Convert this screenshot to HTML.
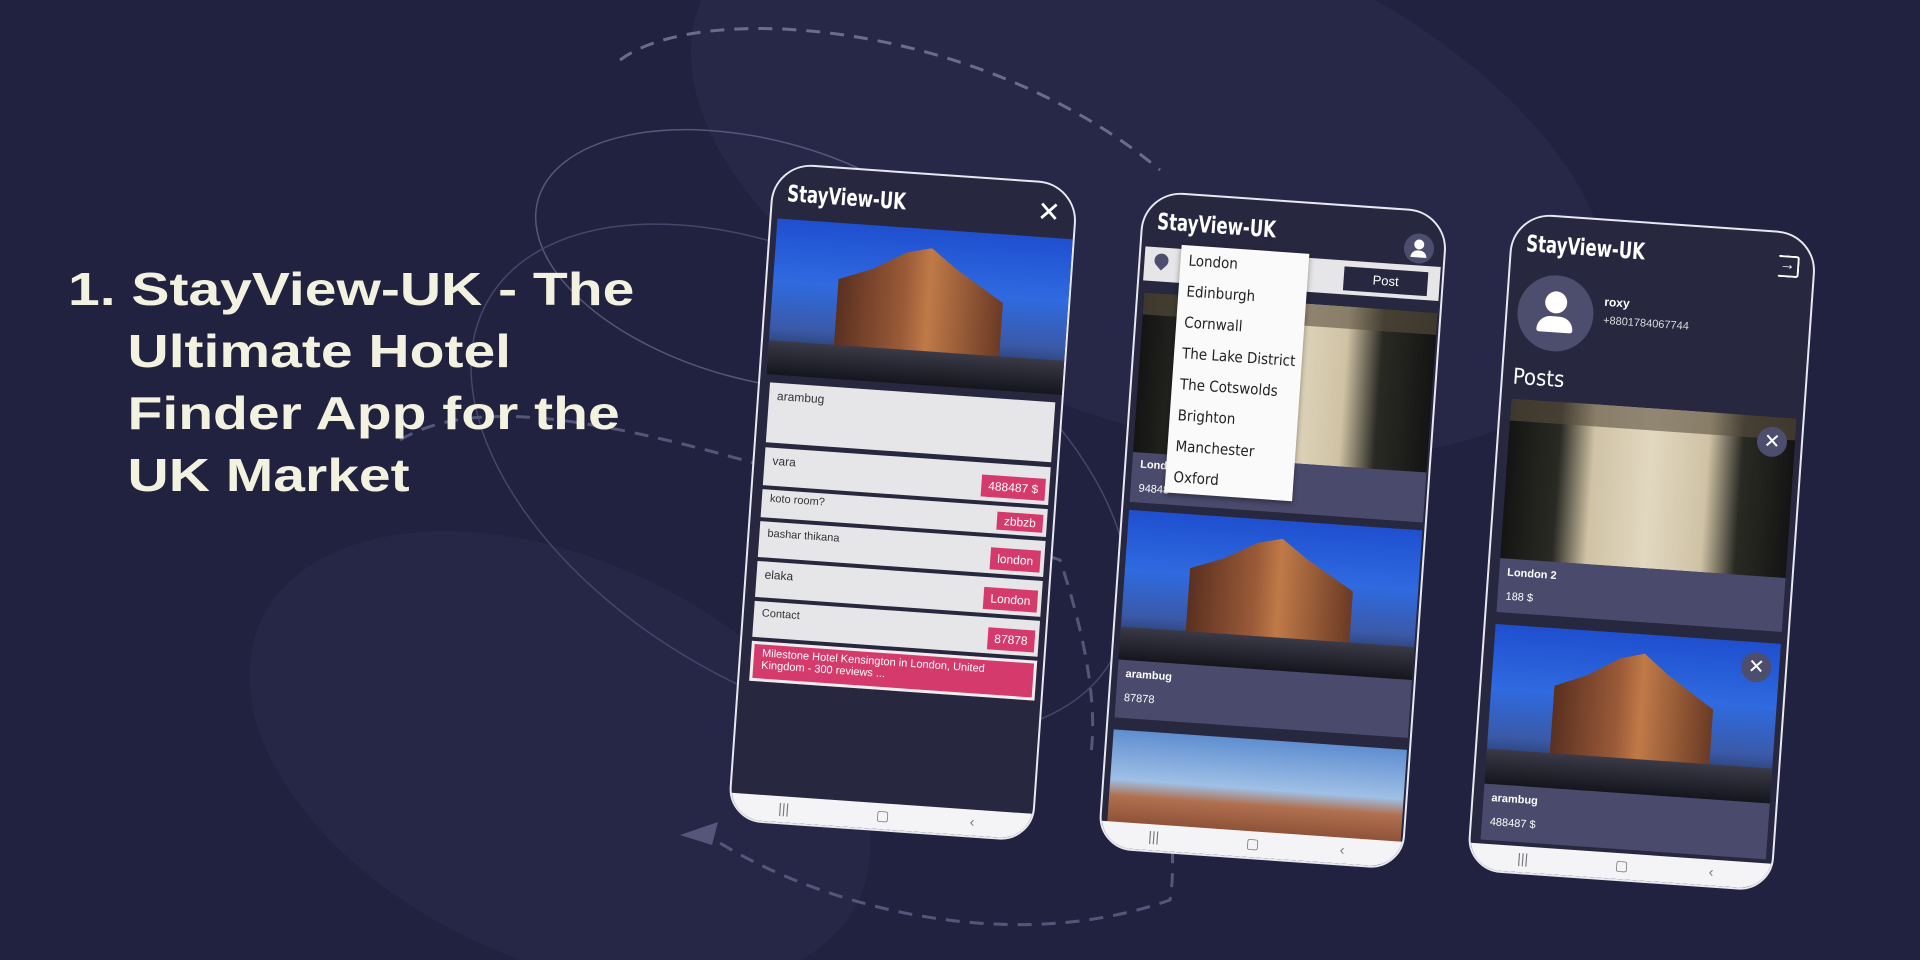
<!DOCTYPE html>
<html style="overflow:hidden"><head><meta charset="utf-8"><style>
*{margin:0;padding:0;box-sizing:border-box}
html,body{width:1920px;height:960px;overflow:hidden}
body{background:#21223f;font-family:"Liberation Sans",sans-serif;position:relative}
.title{position:absolute;left:68px;top:258px;color:#f3f1df;font-weight:bold;font-size:46px;line-height:62px;transform:scaleX(1.24);transform-origin:left top}
.title div{white-space:nowrap}
.title .i{padding-left:48px}
.phone{position:absolute;width:306px;height:660px;background:#27273f;border:2px solid #e8e8f0;border-radius:40px 40px 34px 34px;overflow:hidden;transform:rotate(4deg)}
.hd{position:absolute;left:14px;top:16px;color:#fff;font-weight:bold;font-size:23px;font-family:"DejaVu Sans Condensed","Liberation Sans",sans-serif;transform:scaleX(.8);transform-origin:left;white-space:nowrap}
.nav{position:absolute;left:0;right:0;bottom:0;height:26px;background:#f4f4f6;color:#777;font-size:14px}
.nav span{position:absolute;top:4px}
.night{background:linear-gradient(180deg,#1f4fcf 0%,#2f6ae0 40%,#3a5aa8 70%,#1a1a2a 100%);position:absolute;overflow:hidden}
.night:before{content:"";position:absolute;left:22%;top:12%;width:56%;height:80%;background:linear-gradient(90deg,#5a3020,#9a5a38 40%,#c07a48 55%,#6a3a25);clip-path:polygon(0 30%,20% 20%,40% 5%,55% 0,70% 15%,100% 40%,100% 100%,0 100%)}
.night:after{content:"";position:absolute;left:0;bottom:0;width:100%;height:22%;background:linear-gradient(#3a3a48,#15151d)}
.posh{position:absolute;overflow:hidden;background:linear-gradient(90deg,#141414 0%,#2a2a24 18%,#cfc2a5 30%,#e2d8c0 50%,#cfc2a5 70%,#2a2a24 82%,#141414 100%)}
.posh:after{content:"";position:absolute;left:0;top:0;right:0;height:14%;background:#5a5040;opacity:.6}
.dusk{position:absolute;overflow:hidden;background:linear-gradient(180deg,#5f8ed0,#9fc0e6 45%,#b07050 60%,#7a3e28 100%)}
.row{position:absolute;left:10px;width:286px;background:#e6e6e8;color:#333;font-size:12px;padding:6px 8px}
.badge{position:absolute;right:4px;bottom:4px;background:#d43a6c;color:#fff;font-size:12px;padding:4px 7px}
.cap{position:absolute;background:#4a4a6c;color:#fff;font-size:11px}
.dd div{height:31px;line-height:31px;padding-left:8px;font-size:15px;color:#222;font-family:"DejaVu Sans Condensed","Liberation Sans",sans-serif}
.xbtn{position:absolute;width:30px;height:30px;border-radius:50%;background:#4d4d6e;color:#fff;text-align:center;line-height:30px;font-size:20px}
</style></head><body>
<svg width="1920" height="960" style="position:absolute;left:0;top:0">
<ellipse cx="1150" cy="170" rx="480" ry="250" fill="#272848" transform="rotate(20 1150 170)"/>
<ellipse cx="560" cy="760" rx="330" ry="200" fill="#262746" transform="rotate(25 560 760)"/>
<ellipse cx="760" cy="260" rx="230" ry="120" fill="none" stroke="#55577a" stroke-width="1.5" transform="rotate(15 760 260)"/>
<ellipse cx="800" cy="480" rx="360" ry="210" fill="none" stroke="#45476a" stroke-width="1.5" transform="rotate(30 800 480)"/>
<path d="M620 60 C700 0 980 20 1160 170" fill="none" stroke="#6a6c8a" stroke-width="3" stroke-dasharray="14 10"/>
<path d="M400 440 C500 380 700 440 1060 560 C1080 620 1100 700 1090 760" fill="none" stroke="#55577a" stroke-width="3" stroke-dasharray="14 10"/>
<path d="M700 830 C800 900 1000 960 1170 900 C1175 870 1170 850 1175 830" fill="none" stroke="#55577a" stroke-width="3" stroke-dasharray="14 10"/>
<polygon points="680,835 718,822 712,845" fill="#55577a"/>
</svg>
<div class="title"><div>1. StayView-UK - The</div><div class="i">Ultimate Hotel</div><div class="i">Finder App for the</div><div class="i">UK Market</div></div>

<div class="phone" style="left:750px;top:172px">
<div class="hd">StayView-UK</div>
<div style="position:absolute;right:14px;top:12px;color:#fff;font-size:28px">✕</div>
<div class="night" style="left:6px;top:54px;width:296px;height:156px"></div>
<div class="row" style="top:218px;height:60px">arambug</div>
<div class="row" style="top:283px;height:38px">vara<span class="badge">488487 $</span></div>
<div class="row" style="top:325px;height:28px;font-size:11px;padding-top:3px">koto room?<span class="badge" style="padding:2px 7px">zbbzb</span></div>
<div class="row" style="top:357px;height:36px;font-size:11px">bashar thikana<span class="badge">london</span></div>
<div class="row" style="top:397px;height:36px">elaka<span class="badge">London</span></div>
<div class="row" style="top:437px;height:36px;font-size:11px">Contact<span class="badge">87878</span></div>
<div class="row" style="top:477px;height:40px;background:#d43a6c;color:#fff;border:3px solid #eee;font-size:11px;padding:3px 8px">Milestone Hotel Kensington in London, United Kingdom - 300 reviews ...</div>
<div class="nav"><span style="left:48px">|||</span><span style="left:146px">▢</span><span style="left:240px">‹</span></div>
</div>

<div class="phone" style="left:1120px;top:200px">
<div class="hd">StayView-UK</div>
<div style="position:absolute;right:10px;top:22px;width:30px;height:30px;border-radius:50%;background:#4d4d6e"><div style="position:absolute;left:10px;top:6px;width:10px;height:10px;border-radius:50%;background:#fff"></div><div style="position:absolute;left:7px;top:17px;width:16px;height:7px;border-radius:8px 8px 0 0;background:#fff"></div></div>
<div style="position:absolute;left:4px;top:54px;width:296px;height:34px;background:#e6e6e8"></div>
<div style="position:absolute;left:14px;top:60px;width:14px;height:14px;border-radius:50% 50% 50% 0;transform:rotate(-45deg);background:#4d4d6e"></div>
<div style="position:absolute;left:204px;top:60px;width:84px;height:24px;background:#27273f;color:#fff;font-size:13px;text-align:center;line-height:24px">Post</div>
<div class="posh" style="left:6px;top:100px;width:294px;height:160px"></div>
<div class="cap" style="left:6px;top:260px;width:294px;height:50px;padding:6px 8px"><b>Londo</b><br><br>94848</div>
<div class="dd" style="position:absolute;left:40px;top:50px;width:128px;height:248px;background:#fafafa;box-shadow:0 2px 6px rgba(0,0,0,.4)"><div>London</div><div>Edinburgh</div><div>Cornwall</div><div>The Lake District</div><div>The Cotswolds</div><div>Brighton</div><div>Manchester</div><div>Oxford</div></div>
<div class="night" style="left:6px;top:318px;width:294px;height:150px"></div>
<div class="cap" style="left:6px;top:468px;width:294px;height:58px;padding:8px 8px"><b>arambug</b><br><br>87878</div>
<div class="dusk" style="left:6px;top:538px;width:294px;height:110px"></div>
<div class="nav"><span style="left:48px">|||</span><span style="left:146px">▢</span><span style="left:240px">‹</span></div>
</div>

<div class="phone" style="left:1489px;top:222px">
<div class="hd">StayView-UK</div>
<div style="position:absolute;right:14px;top:22px;width:22px;height:22px;border:2.5px solid #fff;border-radius:3px;border-left-color:transparent;color:#fff;font-size:16px;line-height:16px;text-align:left">→</div>
<div style="position:absolute;left:10px;top:58px;width:76px;height:76px;border-radius:50%;background:#4d4d6e"><div style="position:absolute;left:27px;top:16px;width:22px;height:22px;border-radius:50%;background:#fff"></div><div style="position:absolute;left:20px;top:41px;width:36px;height:16px;border-radius:16px 16px 3px 3px;background:#fff"></div></div>
<div style="position:absolute;left:96px;top:74px;color:#fff;font-size:12px;font-weight:bold">roxy</div>
<div style="position:absolute;left:96px;top:94px;color:#ddd;font-size:11px">+8801784067744</div>
<div style="position:absolute;left:10px;top:150px;color:#fff;font-size:22px;font-family:'DejaVu Sans Condensed',sans-serif">Posts</div>
<div class="posh" style="left:10px;top:184px;width:286px;height:160px"></div>
<div class="xbtn" style="left:258px;top:194px">✕</div>
<div class="cap" style="left:10px;top:344px;width:286px;height:54px;padding:8px 8px"><b>London 2</b><br><br>188 $</div>
<div class="night" style="left:10px;top:410px;width:286px;height:160px"></div>
<div class="xbtn" style="left:258px;top:420px">✕</div>
<div class="cap" style="left:10px;top:570px;width:286px;height:56px;padding:8px 8px"><b>arambug</b><br><br>488487 $</div>
<div class="nav"><span style="left:48px">|||</span><span style="left:146px">▢</span><span style="left:240px">‹</span></div>
</div>
</body></html>
